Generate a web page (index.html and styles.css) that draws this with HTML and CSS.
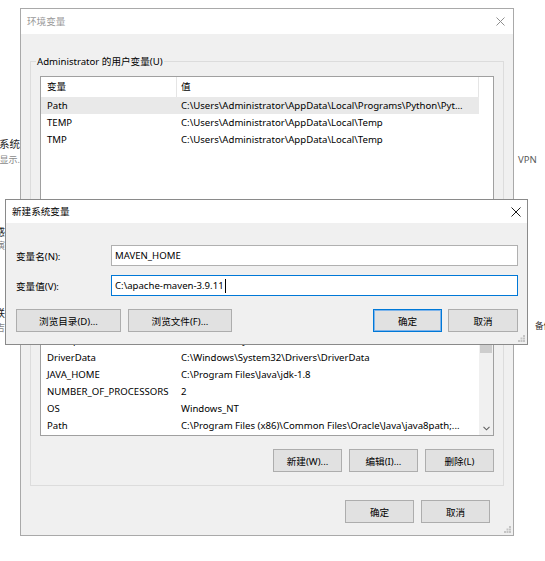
FILE: index.html
```html
<!DOCTYPE html>
<html lang="zh-CN">
<head>
<meta charset="utf-8">
<title>环境变量</title>
<link rel="stylesheet" href="styles.css">
</head>
<body>
<div class="frag f-sys"><span>设置系统</span></div>
<div class="frag f-show"><span>中显示.</span></div>
<div class="frag f-gan"><span>感</span></div>
<div class="frag f-yan"><span>演</span></div>
<div class="frag f-lian"><span>联</span></div>
<div class="frag f-ji"><span>吉</span></div>
<div class="frag-r f-vpn">VPN</div>
<div class="frag-r f-bei">备份</div>

<div class="win outer">
  <div class="titlebar">
    <span class="title inactive">环境变量</span>
    <svg class="xbtn x-outer" width="9" height="9" viewBox="0 0 9 9"><path d="M0.5 0.5L8.5 8.5M8.5 0.5L0.5 8.5" stroke="#8f8f8f" stroke-width="1" fill="none"/></svg>
  </div>
  <div class="client">
    <div class="group g-user">
      <span class="glabel">Administrator 的用户变量(U)</span>
      <div class="lv h-user">
        <div class="lv-body">
          <div class="lv-head"><span class="c1">变量</span><span class="c2">值</span></div>
          <div class="lv-row sel"><span class="c1">Path</span><span class="c2">C:\Users\Administrator\AppData\Local\Programs\Python\Pyt...</span></div>
          <div class="lv-row"><span class="c1">TEMP</span><span class="c2">C:\Users\Administrator\AppData\Local\Temp</span></div>
          <div class="lv-row"><span class="c1">TMP</span><span class="c2">C:\Users\Administrator\AppData\Local\Temp</span></div>
        </div>
      </div>
      <div class="btnrow">
        <span class="btn"></span>
        <span class="btn"></span>
        <span class="btn"></span>
      </div>
    </div>
    <div class="group g-sys">
      <div class="lv h-sys">
        <div class="lv-body">
          <div class="lv-head"></div>
          <div class="lv-row"></div>
          <div class="lv-row"><span class="c1">ComSpec</span><span class="c2">C:\Windows\system32\cmd.exe</span></div>
          <div class="lv-row"><span class="c1">DriverData</span><span class="c2">C:\Windows\System32\Drivers\DriverData</span></div>
          <div class="lv-row"><span class="c1">JAVA_HOME</span><span class="c2">C:\Program Files\Java\jdk-1.8</span></div>
          <div class="lv-row"><span class="c1">NUMBER_OF_PROCESSORS</span><span class="c2">2</span></div>
          <div class="lv-row"><span class="c1">OS</span><span class="c2">Windows_NT</span></div>
          <div class="lv-row"><span class="c1">Path</span><span class="c2">C:\Program Files (x86)\Common Files\Oracle\Java\java8path;...</span></div>
          <div class="lv-row"><span class="c1">PATHEXT</span><span class="c2">.COM;.EXE;.BAT;.CMD;.VBS;.VBE;.JS;.JSE;.WSF;.WSH;.MSC</span></div>
        </div>
        <div class="sb">
          <div class="sb-btn"></div>
          <div class="sb-thumb"></div>
          <div class="sb-track"></div>
          <div class="sb-btn">
            <svg width="7" height="5" viewBox="0 0 7 5"><path d="M0.5 0.8L3.5 3.8L6.5 0.8" stroke="#606060" stroke-width="1.1" fill="none"/></svg>
          </div>
        </div>
      </div>
      <div class="btnrow">
        <span class="btn">新建(W)...</span>
        <span class="btn">编辑(I)...</span>
        <span class="btn">删除(L)</span>
      </div>
    </div>
    <div class="foot">
      <span class="btn">确定</span>
      <span class="btn">取消</span>
    </div>
  </div>
  <svg class="grip" width="7" height="7" viewBox="0 0 7 7"><path d="M5 0h2v2h-2zM5 2.5h2v2h-2zM2.5 2.5h2v2h-2zM5 5h2v2h-2zM2.5 5h2v2h-2zM0 5h2v2h-2z" fill="#c4c4c4"/></svg>
</div>

<div class="win dlg">
  <div class="dlg-title">
    <span class="title">新建系统变量</span>
    <svg class="xbtn x-dlg" width="10" height="10" viewBox="0 0 10 10"><path d="M0.5 0.5L9.5 9.5M9.5 0.5L0.5 9.5" stroke="#1a1a1a" stroke-width="1" fill="none"/></svg>
  </div>
  <div class="dlg-body">
    <div class="field">
      <span class="flabel">变量名(N):</span>
      <span class="inp">MAVEN_HOME</span>
    </div>
    <div class="field f2">
      <span class="flabel">变量值(V):</span>
      <span class="inp focus">C:\apache-maven-3.9.11<span class="caret"></span></span>
    </div>
    <div class="dlg-btns">
      <span class="btn b-dir">浏览目录(D)...</span>
      <span class="btn b-file">浏览文件(F)...</span>
      <span class="spacer"></span>
      <span class="btn b-ok default">确定</span>
      <span class="btn b-cancel">取消</span>
    </div>
  </div>
  <svg class="grip" width="7" height="7" viewBox="0 0 7 7"><path d="M5 0h2v2h-2zM5 2.5h2v2h-2zM2.5 2.5h2v2h-2zM5 5h2v2h-2zM2.5 5h2v2h-2zM0 5h2v2h-2z" fill="#c4c4c4"/></svg>
</div>
</body>
</html>
```
FILE: styles.css
```css
* { box-sizing: border-box; }
html, body { margin: 0; padding: 0; background: #fff; }
body {
  width: 545px;
  height: 561px;
  position: relative;
  overflow: hidden;
  font-family: "Noto Sans", "Noto Sans CJK SC", sans-serif;
  font-size: 9.6px;
  color: #000;
}

/* background page fragments */
.frag {
  position: absolute;
  left: 0;
  overflow: hidden;
  display: flex;
  justify-content: flex-end;
  white-space: nowrap;
}
.f-sys { top: 136px; width: 20px; height: 16px; font-size: 10.5px; color: #1a1a1a; }
.f-show { top: 153px; width: 20px; height: 14px; font-size: 9px; color: #8a8a8a; }
.f-gan { top: 224px; width: 5px; height: 14px; font-size: 10.5px; color: #1a1a1a; }
.f-yan { top: 238px; width: 5px; height: 13px; font-size: 9.6px; color: #8a8a8a; }
.f-lian { top: 305px; width: 5px; height: 14px; font-size: 10.5px; color: #1a1a1a; }
.f-ji { top: 320px; width: 5px; height: 13px; font-size: 9.6px; color: #8a8a8a; }
.frag-r { position: absolute; white-space: nowrap; }
.f-vpn { left: 518px; top: 153px; font-size: 9.6px; color: #5a5a5a; }
.f-bei { left: 535px; top: 319px; font-size: 8.6px; color: #333; }

/* windows */
.win { position: absolute; background: #f0f0f0; display: flex; flex-direction: column; }
.outer { left: 20px; top: 8px; width: 494px; height: 528px; border: 1px solid #a9a9a9; }
.dlg { left: 5px; top: 199px; width: 523px; height: 146px; border: 1px solid #8a8a8a; }

.titlebar { height: 25px; background: #fff; display: flex; align-items: center; padding-left: 6px; }
.title { line-height: 14px; }
.inactive { color: #9a9a9a; }
.xbtn { margin-left: auto; display: block; }
.x-outer { margin-right: 8px; }

.client { flex: 1; padding: 27px 9px 0; display: flex; flex-direction: column; }

.group { position: relative; border: 1px solid #dcdcdc; padding: 14px 9px 13px; }
.g-sys { margin-top: 9px; }
.glabel { position: absolute; top: -8px; left: 5px; padding: 0 1px; background: #f0f0f0; line-height: 15px; white-space: nowrap; }

.lv { display: flex; background: #fff; border: 1px solid #a0a0a0; overflow: hidden; }
.h-user { height: 144px; }
.h-sys { height: 142px; }
.lv-body { flex: 1; min-width: 0; overflow: hidden; }
.lv-head, .lv-row { display: flex; align-items: center; width: 438px; white-space: nowrap; }
.lv-head { height: 20px; }
.lv-row { height: 17px; }
.lv-row.sel { background: #e9e9e9; }
.c1 { width: 136px; padding-left: 6px; flex: none; overflow: hidden; }
.c2 { width: 302px; padding-left: 4px; flex: none; overflow: hidden; }
.lv-head .c1, .lv-head .c2 { height: 20px; line-height: 20px; border-right: 1px solid #e5e5e5; }

.sb { width: 14px; flex: none; background: #f0f0f0; display: flex; flex-direction: column; }
.sb-btn { height: 14px; flex: none; display: flex; align-items: center; justify-content: center; }
.sb-thumb { height: 44px; flex: none; margin: 0 1px; background: #cdcdcd; }
.sb-track { flex: 1; }

.btn {
  height: 23px;
  width: 69px;
  flex: none;
  display: flex;
  align-items: center;
  justify-content: center;
  background: #e1e1e1;
  border: 1px solid #adadad;
  white-space: nowrap;
}
.btnrow { display: flex; justify-content: flex-end; gap: 7px; margin-top: 13px; }
.foot { display: flex; justify-content: flex-end; gap: 7px; margin-top: 14px; padding-right: 14px; }

.grip { position: absolute; right: 2px; bottom: 2px; display: block; }

/* dialog */
.dlg-title { height: 23px; background: #fff; display: flex; align-items: center; padding-left: 6px; }
.x-dlg { margin-right: 6px; }
.dlg-body { padding: 22px 9px 0 10px; }
.field { display: flex; align-items: center; height: 21px; }
.f2 { margin-top: 9px; }
.flabel { width: 95px; flex: none; }
.inp {
  flex: 1;
  height: 21px;
  display: flex;
  align-items: center;
  padding-left: 3px;
  background: #fff;
  border: 1px solid #b0b0b0;
  white-space: nowrap;
}
.inp.focus { border-color: #0078d7; }
.caret { display: inline-block; width: 1px; height: 14px; background: #000; margin-left: 1px; }
.dlg-btns { display: flex; margin-top: 13px; gap: 7px; }
.b-dir { width: 105px; }
.b-file { width: 104px; }
.spacer { flex: 1; }
.b-ok { width: 69px; margin-right: -1px; }
.b-cancel { width: 70px; }
.default { border-color: #0078d7; box-shadow: inset 0 0 0 1px #7eb4ea; }
```
